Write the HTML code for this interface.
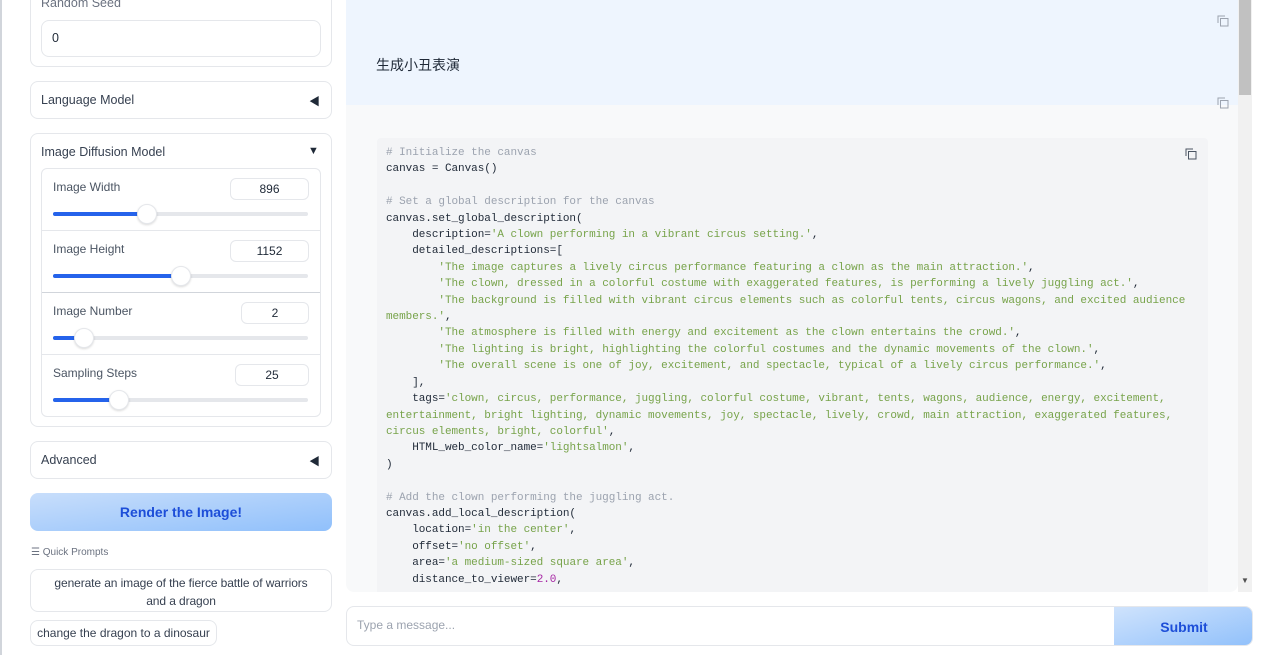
<!DOCTYPE html>
<html><head><meta charset="utf-8"><style>
*{box-sizing:border-box;margin:0;padding:0}
body{width:1280px;height:655px;overflow:hidden;background:#fff;font-family:"Liberation Sans","Noto Sans CJK SC",sans-serif;color:#374151;position:relative}
.a{position:absolute}
.box{position:absolute;border:1px solid #e5e7eb;border-radius:8px;background:#fff}
.lbl{font-size:12.5px;color:#374151}
.sl{font-size:12px;color:#4b5563}
.num{position:absolute;border:1px solid #e5e7eb;border-radius:6px;height:22px;font-size:12px;text-align:center;line-height:20px;color:#1f2937}
.track{position:absolute;left:53px;width:255px;height:4px;border-radius:2px;background:#e5e7eb}
.fill{position:absolute;left:0;top:0;height:4px;border-radius:2px;background:#2563eb}
.thumb{position:absolute;top:-8px;width:20px;height:20px;border-radius:50%;background:#fff;border:1px solid #e5e7eb;box-shadow:0 1px 2px rgba(0,0,0,.15)}
.tri{position:absolute;font-size:11px;color:#1f2937}
pre{font-family:"Liberation Mono",monospace;font-size:11px;letter-spacing:-0.05px;line-height:16.4px;color:#1f2937;white-space:pre}
.c{color:#9ca3af}.s{color:#77a34a}.n{color:#a626a4}
.cp{position:absolute;width:12px;height:12px}
</style></head><body>
<div class="a" style="left:0;top:0;width:2px;height:655px;background:#d1d5db"></div>
<div class="box" style="left:30px;top:-10px;width:302px;height:77px"></div>
<div class="a lbl" style="left:41px;top:-4px;color:#6b7280">Random Seed</div>
<div class="a" style="left:41px;top:20px;width:280px;height:37px;border:1px solid #e5e7eb;border-radius:8px;font-size:12.5px;padding:10px 10px;color:#1f2937">0</div>

<div class="box" style="left:30px;top:81px;width:302px;height:38px"></div>
<div class="a lbl" style="left:41px;top:93px">Language Model</div>
<div class="tri" style="left:309px;top:93px">◀</div>

<div class="box" style="left:30px;top:133px;width:302px;height:294px"></div>
<div class="a lbl" style="left:41px;top:145px">Image Diffusion Model</div>
<div class="tri" style="left:308px;top:145px">▼</div>
<div class="a" style="left:41px;top:168px;width:280px;height:249px;border:1px solid #e5e7eb;border-radius:6px"></div>
<div class="a" style="left:42px;top:230px;width:278px;height:1px;background:#e5e7eb"></div>
<div class="a" style="left:42px;top:292px;width:278px;height:1px;background:#d1d5db"></div>
<div class="a" style="left:42px;top:354px;width:278px;height:1px;background:#e5e7eb"></div>

<div class="a sl" style="left:53px;top:180px">Image Width</div>
<div class="num" style="left:230px;top:178px;width:79px">896</div>
<div class="track" style="top:212px"><div class="fill" style="width:94px"></div><div class="thumb" style="left:84px"></div></div>

<div class="a sl" style="left:53px;top:242px">Image Height</div>
<div class="num" style="left:230px;top:240px;width:79px">1152</div>
<div class="track" style="top:274px"><div class="fill" style="width:128px"></div><div class="thumb" style="left:118px"></div></div>

<div class="a sl" style="left:53px;top:304px">Image Number</div>
<div class="num" style="left:241px;top:302px;width:68px">2</div>
<div class="track" style="top:336px"><div class="fill" style="width:31px"></div><div class="thumb" style="left:21px"></div></div>

<div class="a sl" style="left:53px;top:366px">Sampling Steps</div>
<div class="num" style="left:235px;top:364px;width:74px">25</div>
<div class="track" style="top:398px"><div class="fill" style="width:66px"></div><div class="thumb" style="left:56px"></div></div>

<div class="box" style="left:30px;top:441px;width:302px;height:38px"></div>
<div class="a lbl" style="left:41px;top:453px">Advanced</div>
<div class="tri" style="left:309px;top:453px">◀</div>

<div class="a" style="left:30px;top:493px;width:302px;height:38px;border-radius:8px;background:linear-gradient(to bottom right,#c8defb,#90c0fb);color:#1d4ed8;font-weight:bold;font-size:14px;text-align:center;line-height:38px">Render the Image!</div>
<div class="a" style="left:31px;top:547px;font-size:10px;color:#6b7280">☰ Quick Prompts</div>
<div class="box" style="left:30px;top:569px;width:302px;height:43px;font-size:12px;text-align:center;padding:4px 14px;line-height:18px;color:#374151;letter-spacing:-0.1px">generate an image of the fierce battle of warriors and a dragon</div>
<div class="box" style="left:30px;top:620px;width:187px;height:26px;font-size:12px;text-align:center;line-height:24px;color:#374151">change the dragon to a dinosaur</div>

<div class="a" style="left:346px;top:0;width:892px;height:592px;background:#f8f9fa;border-radius:0 0 8px 8px;overflow:hidden">
 <div class="a" style="left:0;top:0;width:892px;height:105px;background:#eef5fe"></div>
 <div class="a" style="left:30px;top:55px;font-size:14px;color:#1f2937">生成小丑表演</div>
 <div class="a" style="left:31px;top:138px;width:831px;height:470px;background:#f3f4f6;border-radius:4px;padding:7px 9px">
<pre><span class="c"># Initialize the canvas</span>
canvas = Canvas()

<span class="c"># Set a global description for the canvas</span>
canvas.set_global_description(
    description=<span class="s">'A clown performing in a vibrant circus setting.'</span>,
    detailed_descriptions=[
        <span class="s">'The image captures a lively circus performance featuring a clown as the main attraction.'</span>,
        <span class="s">'The clown, dressed in a colorful costume with exaggerated features, is performing a lively juggling act.'</span>,
        <span class="s">'The background is filled with vibrant circus elements such as colorful tents, circus wagons, and excited audience
members.'</span>,
        <span class="s">'The atmosphere is filled with energy and excitement as the clown entertains the crowd.'</span>,
        <span class="s">'The lighting is bright, highlighting the colorful costumes and the dynamic movements of the clown.'</span>,
        <span class="s">'The overall scene is one of joy, excitement, and spectacle, typical of a lively circus performance.'</span>,
    ],
    tags=<span class="s">'clown, circus, performance, juggling, colorful costume, vibrant, tents, wagons, audience, energy, excitement,
entertainment, bright lighting, dynamic movements, joy, spectacle, lively, crowd, main attraction, exaggerated features,
circus elements, bright, colorful'</span>,
    HTML_web_color_name=<span class="s">'lightsalmon'</span>,
)

<span class="c"># Add the clown performing the juggling act.</span>
canvas.add_local_description(
    location=<span class="s">'in the center'</span>,
    offset=<span class="s">'no offset'</span>,
    area=<span class="s">'a medium-sized square area'</span>,
    distance_to_viewer=<span class="n">2.0</span>,
</pre>
 </div>
</div>
<svg class="cp" style="left:1217px;top:15px" viewBox="0 0 12 12" fill="none" stroke="#9ca3af" stroke-width="1"><path d="M1 8V1h7"/><rect x="3.5" y="3.5" width="7.5" height="7.5"/></svg>
<svg class="cp" style="left:1217px;top:97px" viewBox="0 0 12 12" fill="none" stroke="#9ca3af" stroke-width="1"><path d="M1 8V1h7"/><rect x="3.5" y="3.5" width="7.5" height="7.5"/></svg>
<svg class="cp" style="left:1185px;top:148px" viewBox="0 0 12 12" fill="none" stroke="#4b5563" stroke-width="1"><path d="M1 8V1h7"/><rect x="3.5" y="3.5" width="7.5" height="7.5"/></svg>
<div class="a" style="left:1238px;top:0;width:14px;height:592px;background:#f1f1f1"></div>
<div class="a" style="left:1239px;top:0;width:12px;height:95px;background:#c1c1c1"></div>
<div class="a" style="left:1241px;top:576px;font-size:8px;color:#505050">▼</div>
<div class="a" style="left:346px;top:606px;width:907px;height:40px;border:1px solid #e5e7eb;border-radius:8px;overflow:hidden;background:#fff">
 <div class="a" style="left:10px;top:11px;font-size:12px;color:#9ca3af">Type a message...</div>
 <div class="a" style="left:767px;top:0;width:140px;height:40px;background:linear-gradient(to bottom right,#cfe3fc,#90c0fb);color:#1d4ed8;font-weight:bold;font-size:14px;text-align:center;line-height:40px">Submit</div>
</div>
</body></html>
